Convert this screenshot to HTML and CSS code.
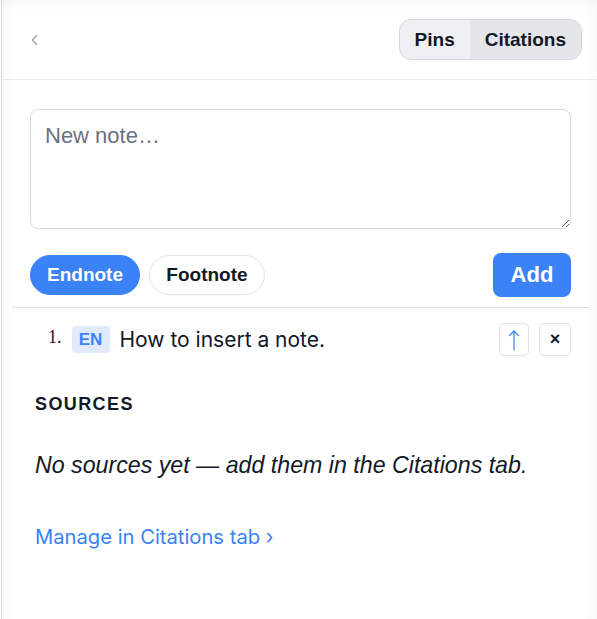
FILE: index.html
```html
<!DOCTYPE html>
<html lang="en">
<head>
<meta charset="utf-8">
<title>Notes</title>
<link rel="stylesheet" href="styles.css">
</head>
<body>
<div class="panel">
  <header class="topbar">
    <button class="back" aria-label="Back">
      <svg width="7" height="12" viewBox="0 0 7 12"><polyline points="5.5,1.5 1.5,6 5.5,10.5" fill="none" stroke="#9aa3b0" stroke-width="1.4" stroke-linecap="round" stroke-linejoin="round"/></svg>
    </button>
    <div class="segmented">
      <button class="seg">Pins</button>
      <button class="seg seg-active">Citations</button>
    </div>
  </header>
  <main class="content">
    <textarea class="note-input" placeholder="New note…"></textarea>
    <div class="actions">
      <div class="kind">
        <button class="pill pill-active pill-end">Endnote</button>
        <button class="pill pill-foot">Footnote</button>
      </div>
      <button class="add">Add</button>
    </div>
    <hr class="sep">
    <div class="note-row">
      <span class="num">1.</span>
      <span class="badge">EN</span>
      <span class="note-text">How to insert a note.</span>
      <div class="row-tools">
        <button class="tool tool-up" aria-label="Move up">
          <svg width="12" height="22" viewBox="0 0 12 22"><path d="M6 21V2M1.5 6.5L6 2l4.5 4.5" fill="none" stroke="#3b82f6" stroke-width="1.2" stroke-linecap="round" stroke-linejoin="round"/></svg>
        </button>
        <button class="tool tool-x">×</button>
      </div>
    </div>
    <section class="sources">
      <h2 class="sources-title">SOURCES</h2>
      <p class="empty">No sources yet — add them in the Citations tab.</p>
      <a class="manage" href="#">Manage in Citations tab ›</a>
    </section>
  </main>
</div>
</body>
</html>
```
FILE: styles.css
```css
html, body {
  margin: 0;
  padding: 0;
  background: #ffffff;
}
body {
  font-family: "Liberation Sans", Arial, sans-serif;
  color: #111827;
}
.panel {
  margin-left: 1px;
  border-left: 1px solid #d6d6d6;
  min-height: 619px;
  box-sizing: border-box;
  box-shadow: inset 12px 0 12px -8px rgba(0,0,0,0.035),
              inset -12px 0 12px -8px rgba(0,0,0,0.035),
              inset 0 12px 12px -8px rgba(0,0,0,0.03);
}
.topbar {
  height: 79px;
  border-bottom: 1px solid #e9e9ec;
  display: flex;
  align-items: center;
  justify-content: space-between;
  padding: 0 15px 0 29px;
}
.back {
  border: 0;
  background: transparent;
  padding: 0;
  width: 8px;
  height: 14px;
  display: flex;
  align-items: center;
  margin-top: 1px;
}
.segmented {
  display: flex;
  height: 41px;
  box-sizing: border-box;
  border: 1px solid #d3d6dc;
  border-radius: 12px;
  overflow: hidden;
  background: #eef0f3;
}
.seg {
  border: 0;
  background: transparent;
  font-family: "Liberation Sans", Arial, sans-serif;
  font-weight: 700;
  font-size: 19px;
  color: #111827;
  padding: 0 15px;
}
.seg-active {
  background: #e4e6ea;
}
.content {
  padding: 29px 26px 0 28px;
}
.note-input {
  display: block;
  width: 100%;
  height: 120px;
  box-sizing: border-box;
  border: 1px solid #d7d9de;
  border-radius: 8px;
  padding: 13px 14px;
  font-family: "Liberation Sans", Arial, sans-serif;
  font-size: 22px;
  line-height: 1.2;
  color: #111827;
  outline: none;
}
.note-input::placeholder {
  color: #6b7280;
}
.actions {
  margin-top: 24px;
  display: flex;
  align-items: center;
  justify-content: space-between;
}
.kind {
  display: flex;
  gap: 9px;
}
.pill {
  height: 40px;
  box-sizing: border-box;
  border-radius: 20px;
  border: 1px solid #e1e3e7;
  background: #ffffff;
  font-family: "Liberation Sans", Arial, sans-serif;
  font-weight: 700;
  font-size: 19px;
  color: #111827;
  padding: 0;
}
.pill-end {
  width: 110px;
}
.pill-foot {
  width: 116px;
}
.pill-active {
  background: #3b82f6;
  border-color: #3b82f6;
  color: #ffffff;
}
.add {
  height: 44px;
  width: 78px;
  border: 0;
  border-radius: 8px;
  background: #3b82f6;
  color: #ffffff;
  font-family: "Liberation Sans", Arial, sans-serif;
  font-weight: 700;
  font-size: 22px;
}
.sep {
  border: 0;
  border-top: 1px solid #dedfe3;
  margin: 10px -18px 0 -18px;
}
.note-row {
  margin-top: 15px;
  display: flex;
  align-items: center;
  height: 33px;
  padding-left: 18px;
}
.num {
  font-family: "Liberation Serif", "Times New Roman", serif;
  font-size: 18px;
  color: #111827;
  margin-right: 10px;
  position: relative;
  top: -2px;
}
.badge {
  width: 38px;
  height: 27px;
  box-sizing: border-box;
  display: flex;
  align-items: center;
  justify-content: center;
  background: #e1e9fd;
  color: #3b82f6;
  border-radius: 4px;
  font-family: "Liberation Sans", Arial, sans-serif;
  font-weight: 700;
  font-size: 17px;
  margin-right: 10px;
}
.note-text {
  font-family: Inter, "Liberation Sans", sans-serif;
  font-size: 21px;
  color: #111827;
  flex: 1;
}
.row-tools {
  display: flex;
  gap: 10px;
}
.tool {
  height: 33px;
  box-sizing: border-box;
  border: 1px solid #dfe1e5;
  border-radius: 5px;
  background: #ffffff;
  padding: 0;
  display: flex;
  align-items: center;
  justify-content: center;
}
.tool-up {
  width: 30px;
}
.tool-x {
  width: 32px;
  color: #111827;
  font-family: "Liberation Sans", Arial, sans-serif;
  font-weight: 700;
  font-size: 18px;
}
.sources {
  padding-left: 5px;
}
.sources-title {
  margin: 37px 0 0 0;
  font-size: 18px;
  line-height: 22px;
  font-weight: 700;
  letter-spacing: 1.4px;
  color: #111827;
}
.empty {
  margin: 36px 0 0 0;
  font-style: italic;
  font-size: 23.2px;
  line-height: 28px;
  color: #111827;
}
.manage {
  display: inline-block;
  margin-top: 46px;
  font-family: Inter, "Liberation Sans", sans-serif;
  font-size: 20.2px;
  line-height: 24px;
  color: #3b82f6;
  text-decoration: none;
}
```
